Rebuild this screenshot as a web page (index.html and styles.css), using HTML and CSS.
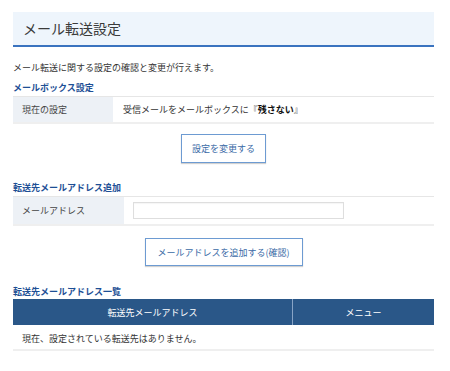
FILE: index.html
```html
<!DOCTYPE html>
<html lang="ja">
<head>
<meta charset="utf-8">
<link rel="stylesheet" href="styles.css">
</head>
<body>
<div class="page">
  <h1 class="page-title">メール転送設定</h1>
  <p class="lead">メール転送に関する設定の確認と変更が行えます。</p>

  <h2 class="sec-title sec-first">メールボックス設定</h2>
  <div class="row row-a">
    <div class="label label-a">現在の設定</div>
    <div class="value">受信メールをメールボックスに『<b>残さない</b>』</div>
  </div>
  <div class="btn-wrap"><button class="btn btn-a">設定を変更する</button></div>

  <h2 class="sec-title sec-second">転送先メールアドレス追加</h2>
  <div class="row row-b">
    <div class="label label-b">メールアドレス</div>
    <div class="value"><input class="text-input" type="text"></div>
  </div>
  <div class="btn-wrap"><button class="btn btn-b">メールアドレスを追加する(確認)</button></div>

  <h2 class="sec-title sec-third">転送先メールアドレス一覧</h2>
  <div class="list">
    <div class="list-head">
      <div class="th th-addr">転送先メールアドレス</div>
      <div class="th th-menu">メニュー</div>
    </div>
    <div class="list-empty">現在、設定されている転送先はありません。</div>
  </div>
</div>
</body>
</html>
```

FILE: styles.css
```css
* { box-sizing: border-box; }
html, body { margin: 0; padding: 0; background: #fff; }
body {
  font-family: "Noto Sans CJK JP", "Noto Sans", sans-serif;
  font-size: 9px;
  color: #333;
}
.page {
  width: 421px;
  margin-left: 13px;
  padding-top: 12px;
}
.page-title {
  margin: 0;
  height: 35px;
  line-height: 33px;
  padding-left: 10px;
  font-size: 14px;
  font-weight: normal;
  color: #3a3a3a;
  background: #eef5fc;
  border-bottom: 2px solid #3a73bf;
}
.lead {
  margin: 14px 0 0;
  line-height: 14px;
}
.sec-title {
  margin: 0;
  font-size: 9px;
  font-weight: bold;
  color: #1d4f95;
  line-height: 14px;
}
.sec-first { margin-top: 6px; margin-bottom: 1px; }
.sec-second { margin-top: 18px; margin-bottom: 1px; }
.sec-third { margin-top: 19px; }
.row {
  display: flex;
  border-top: 1px solid #e6e6e6;
  border-bottom: 2px solid #efefef;
}
.row-a { height: 28px; }
.row-b { height: 30px; }
.label {
  background: #edf1f6;
  padding-left: 9px;
  display: flex;
  align-items: center;
  color: #444;
}
.label-a { width: 100px; }
.label-b { width: 111px; }
.value {
  flex: 1;
  display: flex;
  align-items: center;
  padding-left: 10px;
  color: #333;
}
.value b { color: #111; }
.row-b .value { padding-left: 9px; }
.text-input {
  width: 211px;
  height: 17px;
  border: 1px solid #dedede;
  box-shadow: inset 0 1px 1px rgba(0,0,0,0.04);
  padding: 0;
  margin: 0;
  background: #fff;
}
.btn-wrap {
  display: flex;
  justify-content: center;
}
.btn {
  font-family: inherit;
  font-size: 9px;
  color: #3a6aa6;
  background: #fff;
  border: 1px solid #6d9bd2;
  box-shadow: 0 1px 1px rgba(0,0,0,0.18);
  padding: 0;
  margin: 0;
  cursor: pointer;
}
.btn-a { width: 85px; height: 29px; margin-top: 10px; }
.btn-b { width: 158px; height: 28px; margin-top: 12px; }
.list-head {
  display: flex;
  height: 26px;
  background: #2a5788;
  color: #fff;
}
.th {
  display: flex;
  align-items: center;
  justify-content: center;
}
.th-addr { width: 280px; border-right: 1px solid #88a4c6; }
.th-menu { flex: 1; }
.list-empty {
  height: 26px;
  padding-left: 9px;
  padding-top: 2px;
  display: flex;
  align-items: center;
  border-bottom: 2px solid #efefef;
}
```
